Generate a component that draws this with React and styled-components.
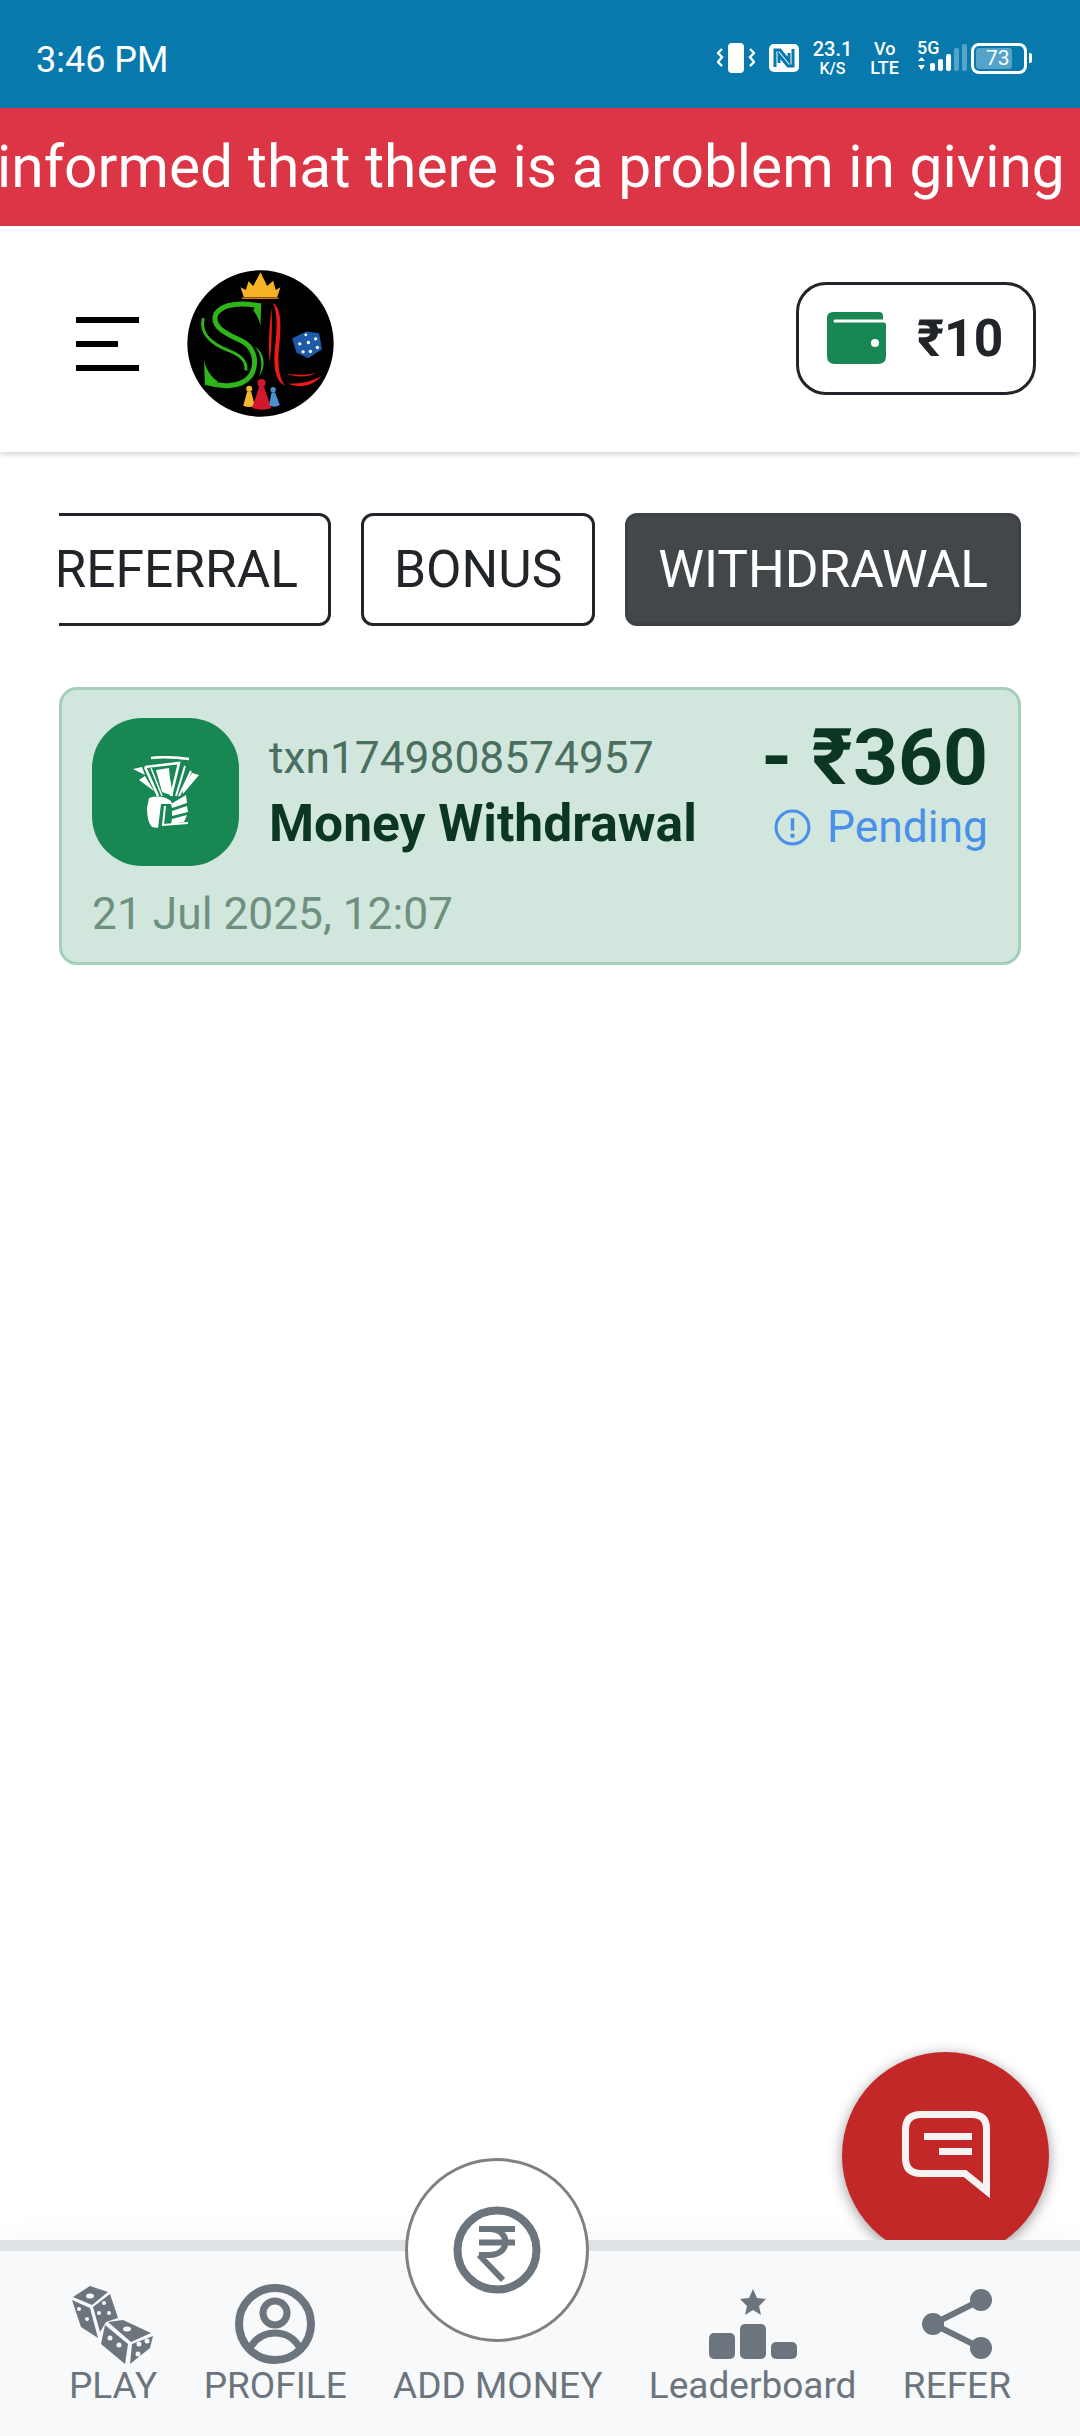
import styled, { createGlobalStyle } from 'styled-components';

const GlobalStyle = createGlobalStyle`
html, body {
  margin: 0;
  padding: 0;
  background: #fff;
  font-family: Roboto, "Liberation Sans", sans-serif;
}
* { box-sizing: border-box; }
`;

const Page = styled.div`
position: relative;
width: 1080px;
height: 2436px;
display: flex;
flex-direction: column;
overflow: hidden;
background: #fff;
`;

const StatusBar = styled.div`
height: 108px;
flex: none;
background: #0779ac;
color: #fff;
display: flex;
align-items: center;
justify-content: space-between;
padding: 8px 48px 0 36px;
`;

const Clock = styled.span`
font-size: 36px;
padding-top: 4px;
`;

const StatusIcons = styled.div`
display: flex;
align-items: center;
`;

const NfcGap = styled.span`
width: 14px;
`;

const SpeedBox = styled.div`
display: flex;
flex-direction: column;
align-items: center;
font-weight: 500;
margin: 0 18px 0 14px;
line-height: 1;
`;

const SpeedTop = styled.span`
font-size: 20px;
`;

const SpeedBottom = styled.span`
font-size: 16px;
margin-top: 2px;
`;

const VoBox = styled.div`
display: flex;
flex-direction: column;
align-items: center;
font-weight: 500;
font-size: 18px;
line-height: 1;
margin-right: 18px;
gap: 1px;
`;

const SignalBox = styled.div`
position: relative;
width: 52px;
height: 30px;
`;

const FiveG = styled.span`
position: absolute;
left: 0;
top: -4px;
font-size: 18px;
font-weight: 500;
line-height: 1;
`;

const Battery = styled.div`
position: relative;
width: 56px;
height: 31px;
margin-left: 2px;
border: 3px solid #fff;
border-radius: 8px;
padding: 2px;
display: flex;
`;

const BatteryFill = styled.div`
width: 36px;
background: #55a3c8;
border-radius: 3px;
`;

const BatteryLabel = styled.span`
position: absolute;
left: 12px;
top: 0;
font-size: 21px;
line-height: 25px;
`;

const BatteryCap = styled.div`
width: 3px;
height: 10px;
margin-left: 2px;
background: #fff;
border-radius: 0 2px 2px 0;
`;

const Banner = styled.div`
height: 118px;
flex: none;
background: #dc3545;
color: #fff;
font-size: 58.7px;
line-height: 118px;
white-space: nowrap;
overflow: hidden;
text-indent: -3px;
`;

const Header = styled.header`
height: 226px;
flex: none;
background: #fff;
box-shadow: 0 2px 6px rgba(0, 0, 0, 0.18);
display: flex;
align-items: center;
justify-content: space-between;
padding: 0 44px 2px 76px;
position: relative;
`;

const HeaderLeft = styled.div`
display: flex;
align-items: center;
gap: 48px;
padding-top: 11px;
`;

const Burger = styled.div`
width: 63px;
display: flex;
flex-direction: column;
gap: 18px;
`;

const BurgerLine = styled.div`
height: 6px;
background: #000;
width: ${(p) => (p.$short ? '42px' : '63px')};
`;

const Logo = styled.svg`
width: 147px;
height: 147px;
display: block;
`;

const WalletButton = styled.div`
width: 240px;
height: 113px;
border: 3px solid #212529;
border-radius: 30px;
display: flex;
align-items: center;
padding-left: 28px;
gap: 31px;
color: #212529;
font-size: 51.5px;
font-weight: 700;
`;

const Main = styled.main`
flex: 1;
padding: 61px 59px 0;
`;

const Tabs = styled.div`
display: flex;
justify-content: flex-end;
gap: 30px;
overflow: hidden;
`;

const Tab = styled.div`
flex: none;
height: 113px;
padding: 0 30px;
display: flex;
align-items: center;
font-size: 51.5px;
border: 3px solid #212529;
border-radius: 12px;
color: ${(p) => (p.$active ? '#fff' : '#212529')};
background: ${(p) => (p.$active ? '#43474a' : '#fff')};
border-color: ${(p) => (p.$active ? '#3d4145' : '#212529')};
`;

const Card = styled.div`
margin-top: 61px;
height: 278px;
background: #d1e7dd;
border: 3px solid #a3cfbb;
border-radius: 18px;
padding: 28px 30px 0;
`;

const CardTop = styled.div`
display: flex;
align-items: flex-start;
`;

const IconTile = styled.div`
width: 147px;
height: 148px;
flex: none;
background: #198754;
border-radius: 50px;
display: flex;
align-items: center;
justify-content: center;
`;

const TxnInfo = styled.div`
flex: 1;
margin-left: 30px;
padding-top: 14px;
`;

const TxnId = styled.div`
font-size: 44.3px;
line-height: 52px;
color: #4a6f60;
`;

const TxnTitle = styled.div`
font-size: 51.5px;
line-height: 58px;
margin-top: 11px;
font-weight: 700;
color: #0a3622;
`;

const TxnRight = styled.div`
display: flex;
flex-direction: column;
align-items: flex-end;
`;

const Amount = styled.div`
font-size: 78.5px;
line-height: 84px;
margin-top: -3px;
font-weight: 700;
color: #0a3622;
`;

const PendingRow = styled.div`
display: flex;
align-items: center;
gap: 16px;
font-size: 44.4px;
line-height: 52px;
margin-top: 2px;
color: #4a90e9;
`;

const TxnDate = styled.div`
font-size: 44.3px;
line-height: 50px;
margin-top: 23px;
color: #6f8f80;
`;

const Fab = styled.div`
position: absolute;
left: 842px;
top: 2052px;
width: 207px;
height: 207px;
border-radius: 50%;
background: #c32828;
box-shadow: 0 3px 14px rgba(0, 0, 0, 0.4);
display: flex;
align-items: flex-start;
justify-content: center;
padding-top: 59px;
z-index: 1;
`;

const Nav = styled.nav`
position: relative;
z-index: 2;
height: 196px;
flex: none;
background: #f8f9fa;
border-top: 11px solid #dee2e6;
box-shadow: 0 -10px 24px rgba(0, 0, 0, 0.02);
display: flex;
justify-content: space-between;
align-items: flex-end;
padding: 0 69px 29px;
`;

const NavItem = styled.div`
position: relative;
display: flex;
flex-direction: column;
align-items: center;
color: #6c757d;
font-size: 37px;
line-height: 42px;
white-space: nowrap;
`;

const NavIcon = styled.svg`
display: block;
margin-bottom: ${(p) => p.$gap || 1}px;
`;

const AddCircle = styled.div`
position: absolute;
left: 12px;
bottom: 65px;
width: 184px;
height: 184px;
border-radius: 50%;
background: #fff;
border: 3px solid #808080;
display: flex;
align-items: center;
justify-content: center;
`;

const tabs = [
  { label: 'REFERRAL' },
  { label: 'BONUS' },
  { label: 'WITHDRAWAL', active: true },
];

function Vibrate() {
  return (
    <svg width="38" height="30" viewBox="0 0 38 30" fill="none">
      <rect x="11" y="0" width="16" height="30" rx="4" fill="#fff" />
      <path d="M5 6 L1 10 L5 14 L1 19 L5 23" stroke="#fff" strokeWidth="2.4" />
      <path d="M33 6 L37 10 L33 14 L37 19 L33 23" stroke="#fff" strokeWidth="2.4" />
    </svg>
  );
}

function Nfc() {
  return (
    <svg width="30" height="28" viewBox="0 0 30 28">
      <rect width="30" height="28" rx="5" fill="#fff" />
      <path d="M6 23 V6 H11 L20 17 V9 M24 5 V22 H19 L10 11 V19" fill="none" stroke="#0779ac" strokeWidth="3" />
    </svg>
  );
}

function SignalBars() {
  return (
    <svg width="52" height="30" viewBox="0 0 52 30" style={{ display: 'block' }}>
      <path d="M1 18 L4.5 14 L8 18 Z M1 22 L8 22 L4.5 27 Z" fill="#fff" />
      <rect x="13" y="20" width="5" height="8" rx="2" fill="#fff" />
      <rect x="21" y="16" width="5" height="12" rx="2" fill="#fff" />
      <rect x="29" y="11" width="5" height="17" rx="2" fill="#fff" />
      <rect x="37" y="5" width="5" height="23" rx="2" fill="#55a3c8" />
      <rect x="45" y="1" width="5" height="27" rx="2" fill="#55a3c8" />
    </svg>
  );
}

function LogoArt() {
  return (
    <Logo viewBox="442 90 440 442">
      <circle cx="662" cy="311" r="220" fill="#000" />
      <path d="M602 142 L618 150 L626 124 L640 138 L662 97 L682 138 L700 122 L708 150 L722 142 L712 172 L612 172 Z" fill="#f5b325" />
      <path d="M606 175 H716" stroke="#d9761a" strokeWidth="5" />
      <g fill="none" stroke="#2fb51a" strokeWidth="15">
        <path d="M660 198 C610 188 550 188 528 222 C512 262 565 285 605 303 C645 322 655 372 632 408 C605 445 540 442 498 428" />
        <path d="M490 235 C478 280 515 312 565 332 C600 346 622 362 618 392" strokeWidth="9" />
      </g>
      <path d="M652 190 L664 190 L662 258 C658 240 652 225 640 212 Z M492 360 C498 390 515 415 535 425 L495 437 Z" fill="#2fb51a" />
      <path d="M645 320 C675 340 680 380 658 410 C670 375 665 345 645 320 Z" fill="#2fb51a" />
      <path d="M700 190 C722 200 725 250 720 300 C715 350 710 400 735 438 C700 420 700 360 708 300 C712 250 712 220 700 190 Z" fill="#f01a14" />
      <path d="M695 205 C698 260 695 320 690 370 C685 320 688 260 695 205 Z" fill="#f01a14" />
      <path d="M742 402 C775 408 810 405 830 398 C810 412 770 415 742 402 Z M745 432 C790 432 825 422 845 408 C830 432 785 450 745 432 Z" fill="#f01a14" />
      <path d="M757 295 L800 275 L838 280 L847 328 L805 355 L770 338 Z" fill="#1d5aa8" />
      <g fill="#fff">
        <circle cx="780" cy="312" r="5" /><circle cx="790" cy="336" r="5" />
        <circle cx="806" cy="308" r="5" /><circle cx="812" cy="335" r="5" />
        <circle cx="828" cy="297" r="5" /><circle cx="833" cy="323" r="5" />
        <circle cx="798" cy="285" r="4" />
      </g>
      <circle cx="628" cy="447" r="9" fill="#f3b632" />
      <path d="M622 455 H634 L645 498 Q628 506 610 498 Z" fill="#f3b632" />
      <circle cx="665" cy="430" r="12" fill="#d3182b" />
      <path d="M658 440 H672 L695 505 Q665 515 637 505 Z" fill="#d3182b" />
      <circle cx="700" cy="450" r="8" fill="#4a90d0" />
      <path d="M695 458 H706 L720 496 Q703 506 688 496 Z" fill="#4a90d0" />
    </Logo>
  );
}

function WalletIcon() {
  return (
    <svg width="59" height="52" viewBox="0 0 59 52">
      <path d="M6 0 H52 Q56 0 56 4 V8 Q56 10 59 12 V44 Q59 52 51 52 H8 Q0 52 0 44 V6 Q0 0 6 0 Z" fill="#198754" />
      <path d="M8 9 H56" stroke="#fff" strokeWidth="3" strokeLinecap="round" />
      <circle cx="48" cy="31" r="4" fill="#fff" />
    </svg>
  );
}

function MoneyHand() {
  return (
    <svg width="66" height="73" viewBox="0 0 66 73">
      <g fill="none" stroke="#fff">
        <path d="M18 2 Q34 0 56 3" strokeWidth="2.5" />
        <path d="M12 11 L46 7 L38 40" strokeWidth="2.5" />
        <path d="M12 11 L25 40" strokeWidth="2.5" />
        <path d="M18 12 L29 40" strokeWidth="1.5" />
        <path d="M43 40 L52 10 M46 40 L58 15" strokeWidth="2" />
        <path d="M32 50 L30 69 L55 67" strokeWidth="2" />
      </g>
      <g fill="#fff">
        <path d="M23 14 L36 12 L37 22 L40 40 L29 36 Z" />
        <path d="M0 13 L9 11 L12 19 Z M6 24 L12 20 L21 35 Z" />
        <path d="M50 38 L66 19 L59 17 L49 32 Z" />
        <path d="M16 42 Q28 38 38 45 L39 48 L28 48 L25 72 L19 71 Q14 66 14 52 Z" />
        <path d="M38 48 L53 39 L54 47 L39 52 Z M39 55 L54 50 L55 56 L39 60 Z M39 63 L54 59 L51 66 L38 68 Z" />
      </g>
    </svg>
  );
}

function PendingIcon() {
  return (
    <svg width="37" height="37" viewBox="0 0 36 36" fill="none">
      <circle cx="18" cy="18" r="16" stroke="#4a90e9" strokeWidth="3" />
      <path d="M18 9 V21" stroke="#4a90e9" strokeWidth="3.4" />
      <circle cx="18" cy="26" r="2.2" fill="#4a90e9" />
    </svg>
  );
}

function ChatIcon() {
  return (
    <svg width="88" height="88" viewBox="0 0 88 88" fill="none" stroke="#f7f3f3" strokeWidth="7">
      <path d="M19 3.5 H70 Q84.5 3.5 84.5 18 V80 L63 62.5 H19 Q3.5 62.5 3.5 47 V19 Q3.5 3.5 19 3.5 Z" />
      <path d="M22 25.5 H70 M37 40.5 H70" />
    </svg>
  );
}

function DiceIcon() {
  return (
    <NavIcon width="82" height="78" viewBox="0 0 82 78" fill="#6c757d">
      <path d="M18 0 L36 6 L20 19 L1 11 Z" />
      <path d="M0 14 L18 22 L26 52 L9 41 Z" />
      <path d="M38 8 L46 32 L34 36 L28 46 L21 21 Z" />
      <path d="M36 36 L51 34 L79 47 L59 56 Z" />
      <path d="M33 39 L56 58 L53 78 L29 58 Z" />
      <path d="M60 58 L81 50 L78 62 L58 78 Z" />
      <g fill="#f8f9fa">
        <ellipse cx="18" cy="10" rx="4" ry="2.5" />
        <circle cx="7" cy="23" r="2" /><circle cx="15" cy="33" r="2" />
        <circle cx="32" cy="17" r="2" /><circle cx="27" cy="27" r="2" /><circle cx="37" cy="27" r="2" />
        <ellipse cx="55" cy="43" rx="4" ry="2.5" />
        <circle cx="38" cy="52" r="2.5" /><circle cx="47" cy="59" r="2.5" />
        <circle cx="67" cy="58" r="2.5" /><circle cx="75" cy="55" r="2.5" /><circle cx="66" cy="68" r="2.5" />
      </g>
    </NavIcon>
  );
}

function ProfileIcon() {
  return (
    <NavIcon width="80" height="80" viewBox="0 0 80 80" fill="none" stroke="#6c757d" strokeWidth="8">
      <circle cx="40" cy="40" r="36" />
      <circle cx="40" cy="29" r="12" strokeWidth="7" />
      <path d="M14 66 C20 54 30 49 40 49 C50 49 60 54 66 66" strokeWidth="7" />
    </NavIcon>
  );
}

function RupeeCircle() {
  return (
    <svg width="88" height="88" viewBox="0 0 88 88" fill="none" stroke="#6c757d">
      <circle cx="44" cy="44" r="39.5" strokeWidth="8" />
      <path d="M26 23 H62 M26 36.5 H62 M26 49 H36 C58 49 58 23 36 23 M26 49 L50 74" strokeWidth="6" />
    </svg>
  );
}

function LeaderIcon() {
  return (
    <NavIcon $gap={6} width="88" height="70" viewBox="0 0 88 70" fill="#6c757d">
      <path d="M44 0 L48 9 L57 10 L50 17 L52 26 L44 21 L36 26 L38 17 L31 10 L40 9 Z" />
      <rect x="0" y="44" width="26" height="26" rx="5" />
      <rect x="31" y="35" width="26" height="35" rx="5" />
      <rect x="62" y="53" width="26" height="17" rx="5" />
    </NavIcon>
  );
}

function ShareIcon() {
  return (
    <NavIcon $gap={6} width="70" height="70" viewBox="0 0 70 70" fill="#6c757d" stroke="#6c757d">
      <path d="M59 11 L11 35 L59 59" fill="none" strokeWidth="6" />
      <circle cx="59" cy="11" r="11" stroke="none" />
      <circle cx="11" cy="35" r="11" stroke="none" />
      <circle cx="59" cy="59" r="11" stroke="none" />
    </NavIcon>
  );
}

export default function App() {
  return (
    <Page>
      <GlobalStyle />
      <StatusBar>
        <Clock>3:46 PM</Clock>
        <StatusIcons>
          <Vibrate />
          <NfcGap />
          <Nfc />
          <SpeedBox>
            <SpeedTop>23.1</SpeedTop>
            <SpeedBottom>K/S</SpeedBottom>
          </SpeedBox>
          <VoBox>
            <span>Vo</span>
            <span>LTE</span>
          </VoBox>
          <SignalBox>
            <FiveG>5G</FiveG>
            <SignalBars />
          </SignalBox>
          <Battery>
            <BatteryFill />
            <BatteryLabel>73</BatteryLabel>
          </Battery>
          <BatteryCap />
        </StatusIcons>
      </StatusBar>
      <Banner>informed that there is a problem in giving</Banner>
      <Header>
        <HeaderLeft>
          <Burger>
            <BurgerLine />
            <BurgerLine $short />
            <BurgerLine />
          </Burger>
          <LogoArt />
        </HeaderLeft>
        <WalletButton>
          <WalletIcon />
          ₹10
        </WalletButton>
      </Header>
      <Main>
        <Tabs>
          {tabs.map((tab) => (
            <Tab key={tab.label} $active={tab.active}>{tab.label}</Tab>
          ))}
        </Tabs>
        <Card>
          <CardTop>
            <IconTile>
              <MoneyHand />
            </IconTile>
            <TxnInfo>
              <TxnId>txn1749808574957</TxnId>
              <TxnTitle>Money Withdrawal</TxnTitle>
            </TxnInfo>
            <TxnRight>
              <Amount>- ₹360</Amount>
              <PendingRow>
                <PendingIcon />
                Pending
              </PendingRow>
            </TxnRight>
          </CardTop>
          <TxnDate>21 Jul 2025, 12:07</TxnDate>
        </Card>
      </Main>
      <Fab>
        <ChatIcon />
      </Fab>
      <Nav>
        <NavItem><DiceIcon />PLAY</NavItem>
        <NavItem><ProfileIcon />PROFILE</NavItem>
        <NavItem>
          <AddCircle><RupeeCircle /></AddCircle>
          ADD MONEY
        </NavItem>
        <NavItem><LeaderIcon />Leaderboard</NavItem>
        <NavItem><ShareIcon />REFER</NavItem>
      </Nav>
    </Page>
  );
}
